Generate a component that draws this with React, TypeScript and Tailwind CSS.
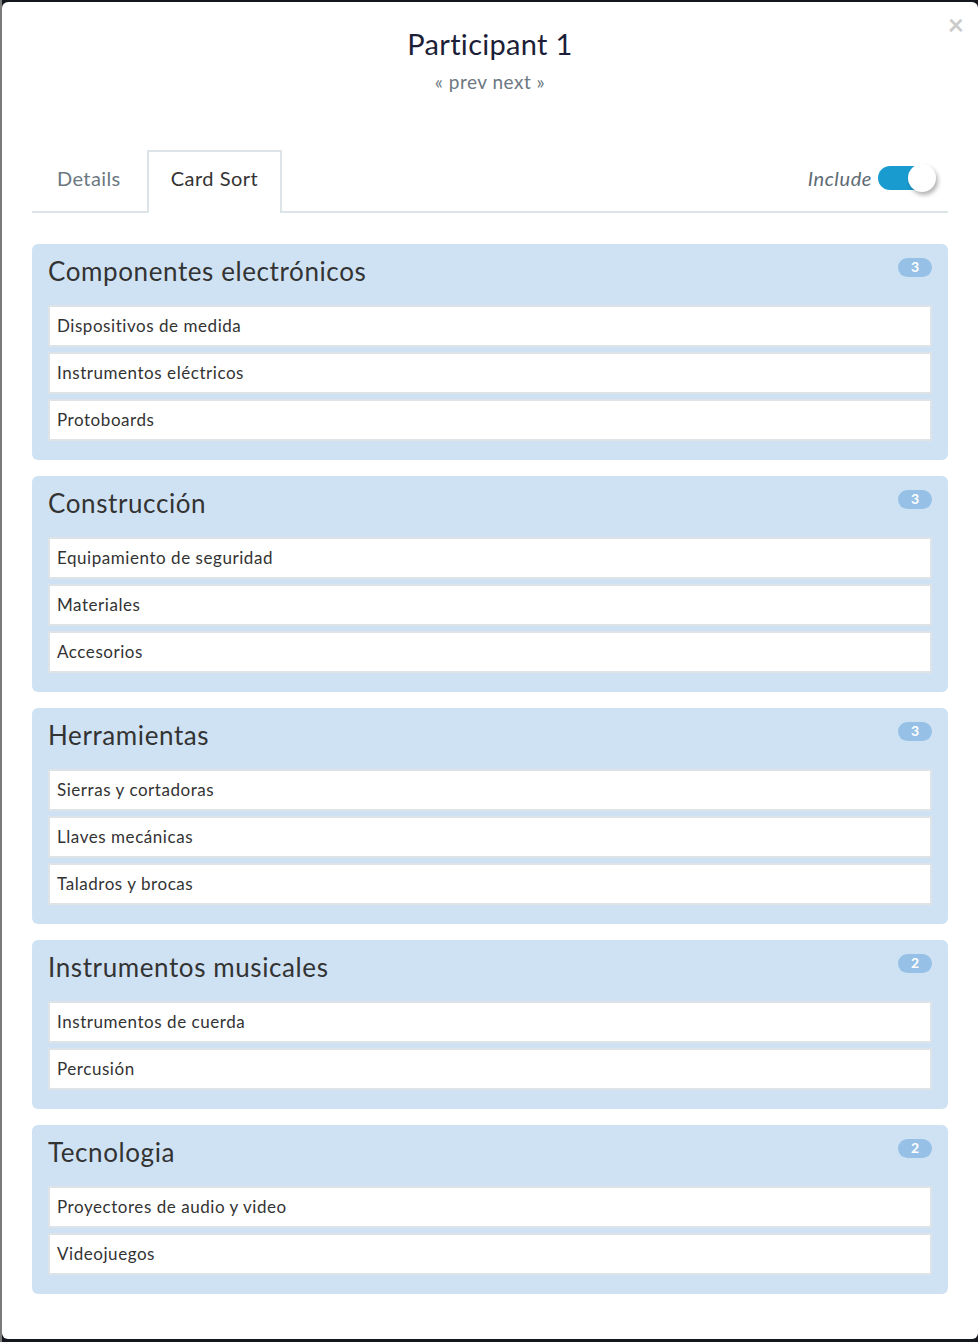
import React from "react";

type Group = { title: string; cards: string[] };

const groups: Group[] = [
  {
    title: "Componentes electrónicos",
    cards: ["Dispositivos de medida", "Instrumentos eléctricos", "Protoboards"],
  },
  {
    title: "Construcción",
    cards: ["Equipamiento de seguridad", "Materiales", "Accesorios"],
  },
  {
    title: "Herramientas",
    cards: ["Sierras y cortadoras", "Llaves mecánicas", "Taladros y brocas"],
  },
  {
    title: "Instrumentos musicales",
    cards: ["Instrumentos de cuerda", "Percusión"],
  },
  {
    title: "Tecnologia",
    cards: ["Proyectores de audio y video", "Videojuegos"],
  },
];

function Toggle() {
  return (
    <div className="relative h-[28px] w-[58px]">
      <div className="absolute left-0 top-[2px] h-[24px] w-[54px] rounded-full bg-[#1a9bd0]" />
      <div className="absolute right-0 top-0 h-[28px] w-[28px] rounded-full bg-white shadow-[2px_3px_4px_rgba(0,0,0,0.3)]" />
    </div>
  );
}

function GroupCard({ group }: { group: Group }) {
  return (
    <div className="rounded-[6px] bg-[#cfe2f3] px-4 pb-[19px]">
      {/* header */}
      <div className="flex h-[61px] items-start justify-between">
        <h3 className="pt-[11px] text-[26px] leading-[32px] tracking-[0.6px] text-[#333]">{group.title}</h3>
        <span className="mt-[14px] flex h-[19px] w-[34px] items-center justify-center rounded-full bg-[#96c0e6] pb-[1px] text-[14px] font-bold leading-none text-white">
          {group.cards.length}
        </span>
      </div>
      <div className="flex flex-col gap-[5px]">
        {group.cards.map((c) => (
          <div
            key={c}
            className="flex h-[42px] items-center border-2 border-[#dde3e6] bg-white px-[7px] text-[17px] tracking-[0.55px] text-[#333]"
          >
            {c}
          </div>
        ))}
      </div>
    </div>
  );
}

export default function App() {
  return (
    <div
      className="h-[1342px] w-[978px] overflow-hidden border-l-2 border-[#7b7b7b] bg-[#15171f] pt-[2px]"
      style={{ fontFamily: "Lato, 'Open Sans', sans-serif" }}
    >
      <div className="relative h-[1337px] w-[976px] rounded-[6px] bg-white px-[30px] pt-[25px]">
        <button className="absolute right-[14px] top-[8px] text-[28px] font-bold leading-none text-[#cbcbcb]">
          ×
        </button>

        {/* title */}
        <div className="flex flex-col items-center">
          <h2 className="text-[29px] leading-[34px] tracking-[0.3px] text-[#1d1f38]">Participant 1</h2>
          <div className="mt-[10px] text-[19px] leading-[22px] tracking-[0.5px] text-[#6c7882]">« prev next »</div>
        </div>

        {/* tabs */}
        <div className="mt-[57px] flex items-end justify-between border-b-2 border-[#dde4e7]">
          <div className="flex">
            <div className="-mb-[2px] flex h-[63px] items-center border-2 border-transparent px-[23px] pb-[8px] text-[20px] tracking-[0.4px] text-[#6c7882]">
              Details
            </div>
            <div className="-mb-[2px] ml-[1px] flex h-[63px] items-center border-2 border-b-0 border-[#dde4e7] bg-white px-[22px] pb-[10px] text-[20px] tracking-[0.5px] text-[#333]">
              Card Sort
            </div>
          </div>
          <div className="mb-[18px] mr-[12px] flex items-center gap-[6px]">
            <span className="text-[20px] italic tracking-[0.6px] text-[#5d6b74]">Include</span>
            <Toggle />
          </div>
        </div>

        {/* groups */}
        <div className="mt-[31px] flex flex-col gap-4">
          {groups.map((g) => (
            <GroupCard key={g.title} group={g} />
          ))}
        </div>
      </div>
    </div>
  );
}
